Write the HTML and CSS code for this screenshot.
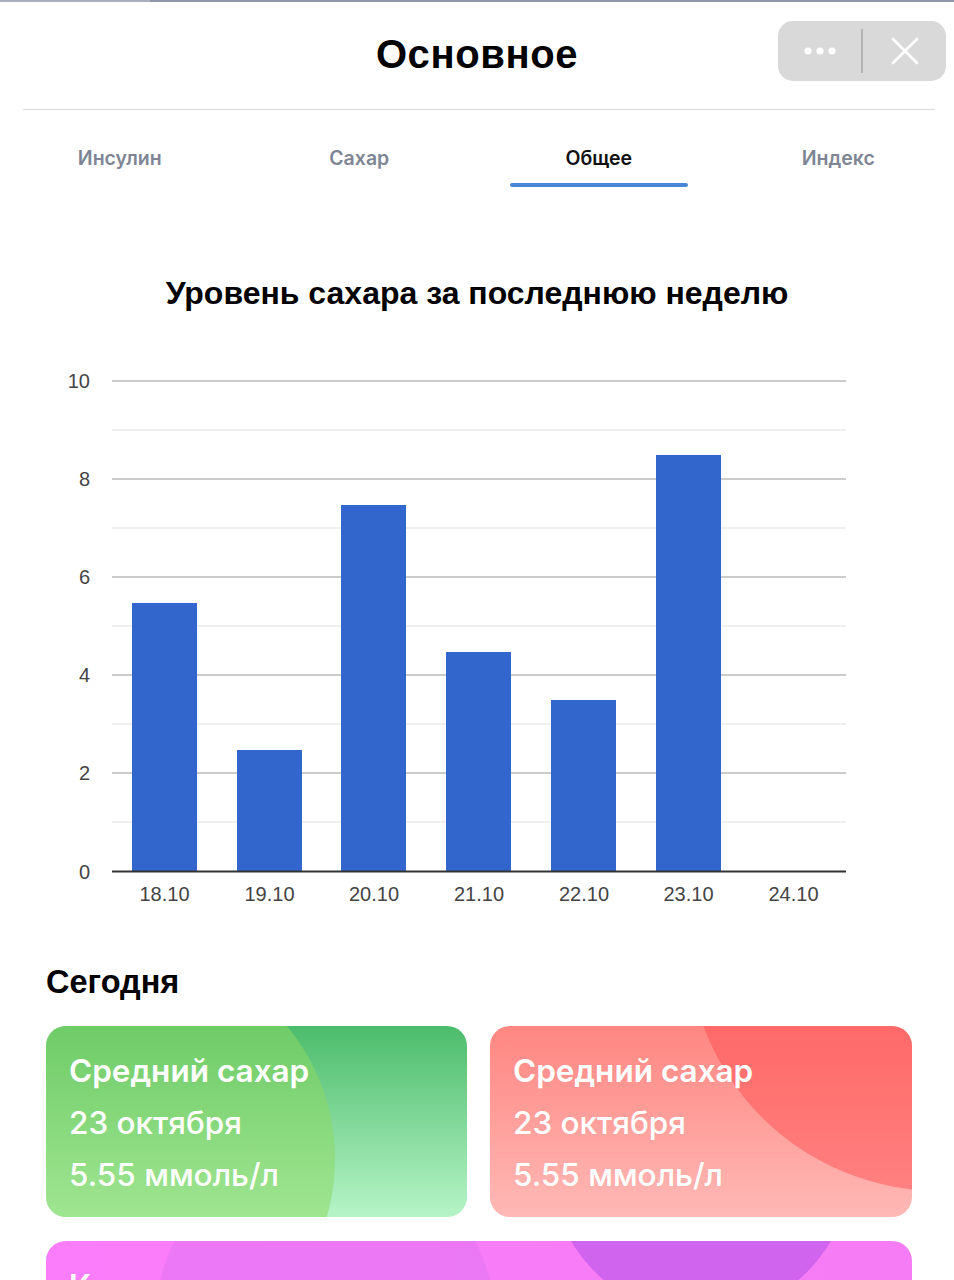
FILE: index.html
```html
<!DOCTYPE html>
<html lang="ru">
<head>
<meta charset="utf-8">
<title>Основное</title>
<link rel="stylesheet" href="styles.css">
</head>
<body>
<div class="page">
  <div class="topline"></div>
  <header class="header">
    <div class="header-side"></div>
    <h1 class="header-title">Основное</h1>
    <div class="header-side header-side--right">
      <div class="capsule">
        <button class="capsule-btn" aria-label="Ещё">
          <svg width="34" height="10" viewBox="0 0 34 10"><circle cx="5" cy="5" r="3.6" fill="#fff"/><circle cx="17" cy="5" r="3.6" fill="#fff"/><circle cx="29" cy="5" r="3.6" fill="#fff"/></svg>
        </button>
        <span class="capsule-divider"></span>
        <button class="capsule-btn" aria-label="Закрыть">
          <svg width="28" height="28" viewBox="0 0 28 28"><path d="M2 2 L26 26 M26 2 L2 26" stroke="#fff" stroke-width="2.6" stroke-linecap="round"/></svg>
        </button>
      </div>
    </div>
  </header>
  <div class="divider"></div>

  <nav class="tabs">
    <div class="tab"><span class="tab-label">Инсулин</span></div>
    <div class="tab"><span class="tab-label">Сахар</span></div>
    <div class="tab tab--active"><span class="tab-label">Общее</span><span class="tab-underline"></span></div>
    <div class="tab"><span class="tab-label">Индекс</span></div>
  </nav>

  <h2 class="chart-title">Уровень сахара за последнюю неделю</h2>

  <svg class="chart" width="954" height="638" viewBox="0 312 954 638">
    <g class="grid-minor" stroke="#ebebeb" stroke-width="1.5">
      <line x1="112" x2="846" y1="431" y2="431"/>
      <line x1="112" x2="846" y1="529" y2="529"/>
      <line x1="112" x2="846" y1="627" y2="627"/>
      <line x1="112" x2="846" y1="725" y2="725"/>
      <line x1="112" x2="846" y1="823" y2="823"/>
    </g>
    <g class="grid-major" stroke="#cccccc" stroke-width="2">
      <line x1="112" x2="846" y1="382" y2="382"/>
      <line x1="112" x2="846" y1="480" y2="480"/>
      <line x1="112" x2="846" y1="578" y2="578"/>
      <line x1="112" x2="846" y1="676" y2="676"/>
      <line x1="112" x2="846" y1="774" y2="774"/>
    </g>
    <g fill="#3366cc">
      <rect x="132" y="604" width="65" height="269"/>
      <rect x="237" y="751" width="65" height="122"/>
      <rect x="341" y="506" width="65" height="367"/>
      <rect x="446" y="653" width="65" height="220"/>
      <rect x="551" y="701" width="65" height="172"/>
      <rect x="656" y="456" width="65" height="417"/>
    </g>
    <line x1="112" x2="846" y1="872.5" y2="872.5" stroke="#333" stroke-width="2"/>
    <g class="axis-label" text-anchor="end">
      <text x="90" y="389">10</text>
      <text x="90" y="487">8</text>
      <text x="90" y="585">6</text>
      <text x="90" y="683">4</text>
      <text x="90" y="781">2</text>
      <text x="90" y="880">0</text>
    </g>
    <g class="axis-label" text-anchor="middle">
      <text x="164.5" y="902">18.10</text>
      <text x="269.5" y="902">19.10</text>
      <text x="374" y="902">20.10</text>
      <text x="479" y="902">21.10</text>
      <text x="584" y="902">22.10</text>
      <text x="688.5" y="902">23.10</text>
      <text x="793.5" y="902">24.10</text>
    </g>
  </svg>

  <h2 class="section-title">Сегодня</h2>

  <div class="cards">
    <div class="card card--green">
      <span class="card-blob card-blob--green"></span>
      <div class="card-text">
        <div>Средний сахар</div>
        <div class="card-line">23 октября</div>
        <div class="card-line">5.55 ммоль/л</div>
      </div>
    </div>
    <div class="card card--red">
      <span class="card-blob card-blob--red"></span>
      <div class="card-text">
        <div>Средний сахар</div>
        <div class="card-line">23 октября</div>
        <div class="card-line">5.55 ммоль/л</div>
      </div>
    </div>
    <div class="card card--pink card--wide">
      <span class="card-blob card-blob--pink1"></span>
      <span class="card-blob card-blob--pink2"></span>
      <div class="card-text">
        <div>Количество углеводов</div>
        <div class="card-line">23 октября</div>
        <div class="card-line">120 г</div>
      </div>
    </div>
  </div>
</div>
</body>
</html>
```
FILE: styles.css
```css
html, body {
  margin: 0;
  padding: 0;
  background: #ffffff;
}
body {
  font-family: "Liberation Sans", Arial, sans-serif;
  color: #000;
  overflow: hidden;
}
.page {
  width: 954px;
  height: 1280px;
  overflow: hidden;
}
.topline {
  height: 2px;
  background: linear-gradient(90deg, #a9afbd 0, #a9afbd 150px, #8f97a8 150px, #8f97a8 100%);
}
.header {
  display: grid;
  grid-template-columns: 1fr auto 1fr;
  align-items: start;
  height: 107px;
}
.header-title {
  margin: 30px 0 0;
  font-family: "Liberation Sans", Arial, sans-serif;
  font-weight: 700;
  font-size: 40px;
  line-height: 44px;
  letter-spacing: 0.6px;
  color: #000;
}
.header-side--right {
  display: flex;
  justify-content: flex-end;
  padding: 19px 8px 0 0;
}
.capsule {
  display: flex;
  align-items: center;
  width: 168px;
  height: 60px;
  border-radius: 15px;
  background: #d9d9d9;
}
.capsule-btn {
  flex: 1;
  height: 100%;
  border: 0;
  padding: 0;
  background: transparent;
  display: flex;
  align-items: center;
  justify-content: center;
}
.capsule-divider {
  width: 2px;
  height: 44px;
  background: #b4b4b4;
}
.divider {
  height: 1px;
  margin: 0 19px 0 23px;
  background: #dcdcdc;
}
.tabs {
  display: grid;
  grid-template-columns: repeat(4, 1fr);
  width: 958px;
  padding-top: 36px;
}
.tab {
  display: flex;
  flex-direction: column;
  align-items: center;
}
.tab-label {
  font-family: "Inter", "Noto Sans", sans-serif;
  font-weight: 600;
  font-size: 19.5px;
  line-height: 24px;
  color: #7e8695;
}
.tab--active .tab-label {
  color: #111;
}
.tab-underline {
  width: 178px;
  height: 4px;
  margin-top: 13px;
  border-radius: 2px;
  background: #4a86d8;
}
.chart-title {
  margin: 88px 0 0;
  text-align: center;
  font-family: "Liberation Sans", Arial, sans-serif;
  font-weight: 700;
  font-size: 32px;
  line-height: 36px;
  color: #000;
}
.chart {
  display: block;
}
.axis-label {
  font-family: "Liberation Sans", Arial, sans-serif;
  font-size: 20px;
  fill: #444;
}
.section-title {
  margin: 15px 46px 0;
  font-family: "Liberation Sans", Arial, sans-serif;
  font-weight: 700;
  font-size: 32.5px;
  line-height: 36px;
  color: #000;
}
.cards {
  display: grid;
  grid-template-columns: 421px 422px;
  column-gap: 23px;
  row-gap: 24px;
  padding: 26px 0 0 46px;
}
.card {
  position: relative;
  overflow: hidden;
  height: 191px;
  border-radius: 20px;
}
.card--wide {
  grid-column: 1 / -1;
}
.card--green {
  background: linear-gradient(180deg, #4cbc6b 0%, #b6f4c7 100%);
}
.card--red {
  background: linear-gradient(180deg, #ff8681 0%, #ffb9b6 100%);
}
.card--pink {
  background: linear-gradient(90deg, #fb7dfb 0%, #f57cf4 100%);
}
.card-blob {
  position: absolute;
  border-radius: 50%;
}
.card-blob--green {
  left: -127px;
  top: -75px;
  width: 416px;
  height: 416px;
  background: rgba(140, 216, 100, 0.55);
}
.card-blob--red {
  left: 198px;
  top: -339px;
  width: 504px;
  height: 504px;
  background: rgba(255, 76, 78, 0.48);
}
.card-blob--pink1 {
  left: 109px;
  top: -90px;
  width: 340px;
  height: 340px;
  background: rgba(205, 110, 240, 0.3);
}
.card-blob--pink2 {
  left: 505px;
  top: -225px;
  width: 300px;
  height: 300px;
  background: #d064ee;
}
.card-text {
  position: relative;
  padding: 19px 23px 0;
  font-family: "Inter", "Noto Sans", sans-serif;
  font-weight: 600;
  font-size: 31.5px;
  line-height: 52px;
  color: #fff;
}
.card-line {
  font-weight: 500;
}
```
